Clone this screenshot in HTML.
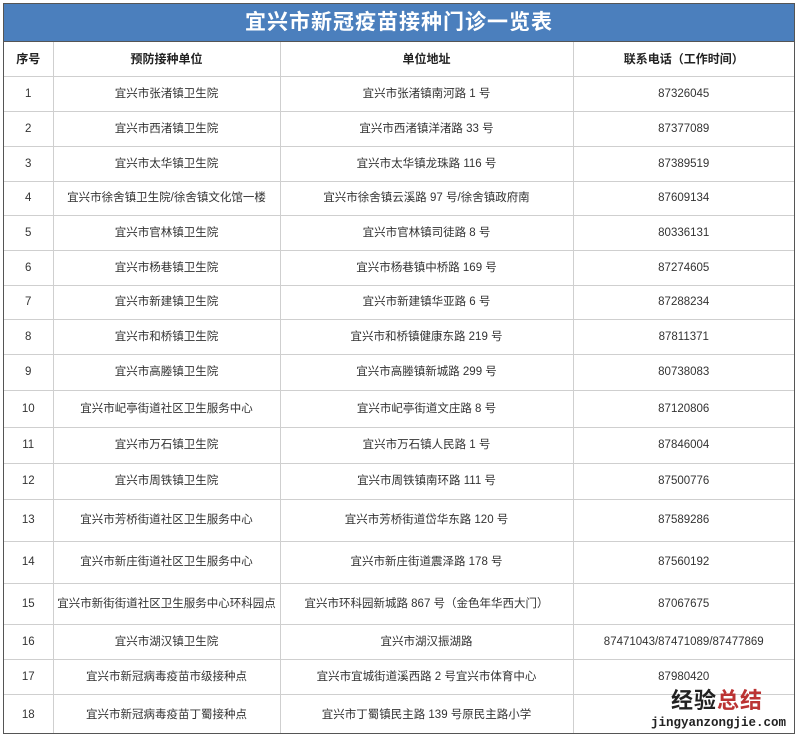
<!DOCTYPE html>
<html><head><meta charset="utf-8"><style>
body{margin:0;background:#fff;width:800px;height:738px;overflow:hidden;font-family:"Liberation Sans","Noto Sans CJK SC",sans-serif;}
.wrap{position:absolute;left:3px;top:3px;width:792px;height:731px;border:1px solid #555;box-sizing:border-box;overflow:hidden}
.title{height:37px;background:#4b7fbd;color:#fff;font-size:21px;font-weight:bold;text-align:center;line-height:37px;letter-spacing:1px;border-bottom:1px solid #555}
table{border-collapse:collapse;width:790px;table-layout:fixed;}
td{border:1px solid #cfcfcf;text-align:center;font-size:11.5px;color:#333;padding:0;white-space:nowrap;overflow:hidden;line-height:14px}
tr td:first-child{border-left:none}
tr td:last-child{border-right:none}
th{border:1px solid #cfcfcf;border-top:none;font-size:12px;font-weight:bold;color:#222;height:33px;padding:0;line-height:14px}
tr:last-child td{border-bottom:none}
.logo{position:absolute;left:671px;top:688px;font-size:22px;font-weight:bold;color:#222;letter-spacing:1px;line-height:26px}
.logo span{color:#b33}
.url{position:absolute;left:651px;top:715px;font-family:"Liberation Mono",monospace;font-size:12.5px;color:#222;font-weight:bold;line-height:16px}
</style></head><body>
<div class="wrap">
<div class="title">宜兴市新冠疫苗接种门诊一览表</div>
<table>
<colgroup><col style="width:49px"><col style="width:227px"><col style="width:293px"><col style="width:221px"></colgroup>
<tr style="height:34px"><th style="border-left:none">序号</th><th>预防接种单位</th><th>单位地址</th><th style="border-right:none">联系电话（工作时间）</th></tr>
<tr style="height:35px"><td>1</td><td>宜兴市张渚镇卫生院</td><td>宜兴市张渚镇南河路 1 号</td><td>87326045</td></tr>
<tr style="height:35px"><td>2</td><td>宜兴市西渚镇卫生院</td><td>宜兴市西渚镇洋渚路 33 号</td><td>87377089</td></tr>
<tr style="height:35px"><td>3</td><td>宜兴市太华镇卫生院</td><td>宜兴市太华镇龙珠路 116 号</td><td>87389519</td></tr>
<tr style="height:34px"><td>4</td><td>宜兴市徐舍镇卫生院/徐舍镇文化馆一楼</td><td>宜兴市徐舍镇云溪路 97 号/徐舍镇政府南</td><td>87609134</td></tr>
<tr style="height:35px"><td>5</td><td>宜兴市官林镇卫生院</td><td>宜兴市官林镇司徒路 8 号</td><td>80336131</td></tr>
<tr style="height:35px"><td>6</td><td>宜兴市杨巷镇卫生院</td><td>宜兴市杨巷镇中桥路 169 号</td><td>87274605</td></tr>
<tr style="height:34px"><td>7</td><td>宜兴市新建镇卫生院</td><td>宜兴市新建镇华亚路 6 号</td><td>87288234</td></tr>
<tr style="height:35px"><td>8</td><td>宜兴市和桥镇卫生院</td><td>宜兴市和桥镇健康东路 219 号</td><td>87811371</td></tr>
<tr style="height:36px"><td>9</td><td>宜兴市高塍镇卫生院</td><td>宜兴市高塍镇新城路 299 号</td><td>80738083</td></tr>
<tr style="height:37px"><td>10</td><td>宜兴市屺亭街道社区卫生服务中心</td><td>宜兴市屺亭街道文庄路 8 号</td><td>87120806</td></tr>
<tr style="height:36px"><td>11</td><td>宜兴市万石镇卫生院</td><td>宜兴市万石镇人民路 1 号</td><td>87846004</td></tr>
<tr style="height:36px"><td>12</td><td>宜兴市周铁镇卫生院</td><td>宜兴市周铁镇南环路 111 号</td><td>87500776</td></tr>
<tr style="height:42px"><td>13</td><td>宜兴市芳桥街道社区卫生服务中心</td><td>宜兴市芳桥街道岱华东路 120 号</td><td>87589286</td></tr>
<tr style="height:42px"><td>14</td><td>宜兴市新庄街道社区卫生服务中心</td><td>宜兴市新庄街道震泽路 178 号</td><td>87560192</td></tr>
<tr style="height:41px"><td>15</td><td>宜兴市新街街道社区卫生服务中心环科园点</td><td>宜兴市环科园新城路 867 号（金色年华西大门）</td><td>87067675</td></tr>
<tr style="height:35px"><td>16</td><td>宜兴市湖汉镇卫生院</td><td>宜兴市湖汉振湖路</td><td>87471043/87471089/87477869</td></tr>
<tr style="height:35px"><td>17</td><td>宜兴市新冠病毒疫苗市级接种点</td><td>宜兴市宜城街道溪西路 2 号宜兴市体育中心</td><td>87980420</td></tr>
<tr style="height:41px"><td>18</td><td>宜兴市新冠病毒疫苗丁蜀接种点</td><td>宜兴市丁蜀镇民主路 139 号原民主路小学</td><td></td></tr>
</table>
</div>
<div class="logo">经验<span>总结</span></div>
<div class="url">jingyanzongjie.com</div>
</body></html>
